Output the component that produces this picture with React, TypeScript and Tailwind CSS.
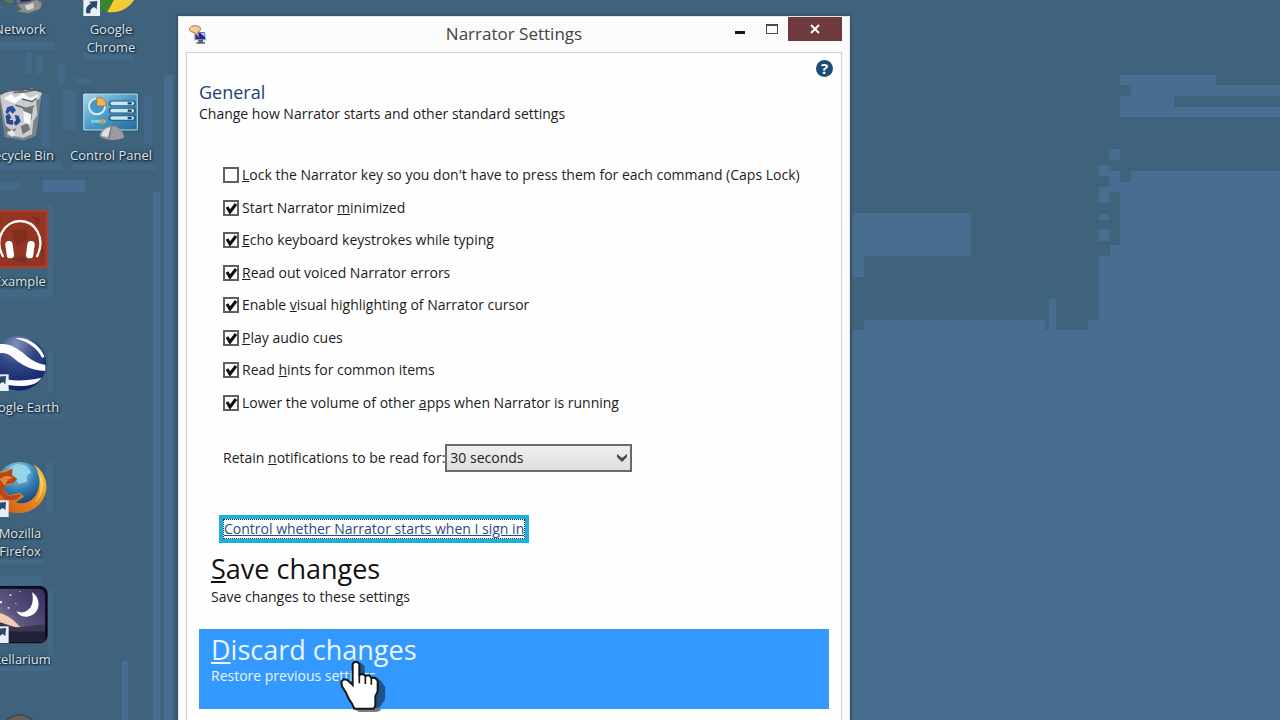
import type { ReactNode } from "react";

const options = [
  {
    id: "lock",
    checked: false,
    label: (
      <>
        <u>L</u>ock the Narrator key so you don't have to press them for each
        command (Caps Lock)
      </>
    ),
  },
  {
    id: "minimized",
    checked: true,
    label: (
      <>
        Start Narrator <u>m</u>inimized
      </>
    ),
  },
  {
    id: "echo",
    checked: true,
    label: (
      <>
        <u>E</u>cho keyboard keystrokes while typing
      </>
    ),
  },
  {
    id: "errors",
    checked: true,
    label: (
      <>
        <u>R</u>ead out voiced Narrator errors
      </>
    ),
  },
  {
    id: "highlight",
    checked: true,
    label: (
      <>
        Enable <u>v</u>isual highlighting of Narrator cursor
      </>
    ),
  },
  {
    id: "audio",
    checked: true,
    label: (
      <>
        <u>P</u>lay audio cues
      </>
    ),
  },
  {
    id: "hints",
    checked: true,
    label: (
      <>
        Read <u>h</u>ints for common items
      </>
    ),
  },
  {
    id: "volume",
    checked: true,
    label: (
      <>
        Lower the volume of other <u>a</u>pps when Narrator is running
      </>
    ),
  },
];

const Shortcut = () => (
  <g>
    <path d="M0 118h50v50H0z" fill="#e9eff3" />
    <path
      d="M9 160c-3-14 2-25 14-29l-6-6 25-2-2 25-7-7c-9 3-13 9-12 19z"
      fill="#28486e"
    />
  </g>
);

const NetworkIcon = () => (
  <>
    <path d="M20 20h90v114l-60 8-30-12z" fill="#4b4b70" />
    <path d="M28 30h62v100l-40 4-22-10z" fill="#5b4d9a" />
    <path d="M26 126l24 14 20-4-22-12z" fill="#48804f" />
    <path d="M70 60l68-8 12 84-40 12-36-8z" fill="#6c6f78" />
    <path d="M80 70l48-6 8 66-50 4z" fill="#211f62" />
    <path
      d="M72 142l32-6 30-10 18 12-6 18-36 14-40-6 16-8z"
      fill="#8f9191"
      stroke="#56616b"
      strokeWidth="4"
    />
    <path d="M98 146l26-8 2 16-20 6z" fill="#d5d6d6" />
  </>
);

const BinIcon = () => (
  <>
    <path d="M20 34l130-8-18 132-36 14-58-10z" fill="#7b8488" />
    <path
      d="M24 38l30-18 36 4 30-8 30 14-8 18-10 4 4 44-12 18-4 40-26 10-48-8z"
      fill="#c9cdd0"
    />
    <path d="M34 46l24-14 10 12 26-14 20 16 26-12-8 20-22 4-20-12-22 16z" fill="#f8f9fa" />
    <path
      d="M64 28l40-2 34-8M90 48l30 8 14-10M70 66l36 12 20-8"
      stroke="#62696d"
      strokeWidth="5"
      fill="none"
    />
    <path
      d="M92 76l32-8-6 44-18-14zM86 130l22-10 6 20-22 14zM36 124l20 16 18-4-12 18-22-2z"
      fill="#737777"
    />
    <path d="M94 84l24 10-4 32-18-8z" fill="#f4f5f6" />
    <path d="M46 72l16-4 10 14-10 10-8-8-8 10-6-6z" fill="#2f4e9e" />
    <path d="M40 98l12-6 6 12-6 6 12 2-2 14-18-4z" fill="#294892" />
    <path d="M68 96l12 2 6 18-14 12-8-8 8-8z" fill="#29458b" />
    <path d="M44 148l18-8 8 14-10 8z" fill="#e6e7e8" />
    <path d="M20 34c30-16 104-20 130-8" stroke="#4d5660" strokeWidth="5" fill="none" />
  </>
);

const HeadphonesIcon = () => (
  <>
    <path d="M-6 2h175v176H-6z" fill="#a5402e" />
    <path d="M-6 10h167v161H-6z" fill="#933522" />
    <path
      d="M10 20l20 5-8 20zM120 20l26 10-6 22zM60 66l40-8 8 36-36 14zM46 150l50-8 12 22zM146 100l10 30-6 30z"
      fill="#7f2e20"
    />
    <path
      d="M34 144C2 88 40 36 84 36c44 0 80 50 50 108"
      fill="none"
      stroke="#fffaf6"
      strokeWidth="7"
    />
    <rect x="42" y="96" width="22" height="52" rx="11" fill="#fff" transform="rotate(-8 53 122)" />
    <rect x="104" y="96" width="22" height="52" rx="11" fill="#fff" transform="rotate(8 115 122)" />
  </>
);

const EarthIcon = () => (
  <>
    <defs>
      <radialGradient id="earth" cx="45%" cy="15%" r="85%">
        <stop offset="0" stopColor="#8290b8" />
        <stop offset=".45" stopColor="#2f4584" />
        <stop offset="1" stopColor="#101f68" />
      </radialGradient>
      <clipPath id="earthClip">
        <circle cx="81" cy="85" r="82" />
      </clipPath>
    </defs>
    <circle cx="81" cy="85" r="82" fill="url(#earth)" />
    <g clipPath="url(#earthClip)" fill="#fdfdff">
      <path d="M70 10c36-8 76 22 88 56l-8 2C134 38 108 20 70 10z" />
      <path d="M0 34c40-18 72 2 98 24 20 18 38 28 62 32v18c-44-2-70-18-92-36C48 54 34 48 0 62z" />
      <path d="M0 120c44 20 92 20 148 8-8 18-36 25-66 25-34 0-64-10-82-20z" />
    </g>
    <Shortcut />
  </>
);

const FirefoxIcon = () => (
  <>
    <defs>
      <radialGradient id="globe" cx="45%" cy="20%" r="75%">
        <stop offset="0" stopColor="#a2dcf0" />
        <stop offset=".5" stopColor="#347fb3" />
        <stop offset="1" stopColor="#143267" />
      </radialGradient>
      <linearGradient id="tail" x1="0" y1="1" x2="1" y2="0">
        <stop offset="0" stopColor="#c84c15" />
        <stop offset=".65" stopColor="#ee9726" />
        <stop offset="1" stopColor="#fbd94c" />
      </linearGradient>
    </defs>
    <circle cx="84" cy="76" r="73" fill="url(#globe)" />
    <path d="M52 22l22-14 30 6 14 20-14 10 2 18-26 6-12-18-20 4z" fill="#94d4e9" />
    <path
      d="M124 10c32 18 46 58 36 88-10 34-44 60-82 58-38 2-70-24-78-60l4-60 20-4 30-8-2 18 20 12-14 16-18 2-6 14 18 16 32-6 12 10-24 18c30 10 58-8 66-36 8-26 6-56-14-78z"
      fill="url(#tail)"
    />
    <path
      d="M4 36l36-2 22-12-2 20 16 12-12 12-22 4-8 20 18 14 38-4-18 16-30 2-18-18-4-28z"
      fill="#b6471c"
    />
    <path d="M22 54l20-10 22 4-16 8-10 18z" fill="#e48637" />
    <path d="M132 26c20 32 18 74-4 98 20-12 36-54 18-80z" fill="#fbd45a" />
    <Shortcut />
  </>
);

const StellariumIcon = () => (
  <>
    <defs>
      <linearGradient id="night" x1="1" y1="0" x2="0" y2="1">
        <stop offset="0" stopColor="#332d5c" />
        <stop offset=".55" stopColor="#5c5680" />
        <stop offset="1" stopColor="#d3b3a4" />
      </linearGradient>
    </defs>
    <rect x="-3" y="-3" width="170" height="172" rx="24" fill="#0c0c1c" />
    <path d="M3 5h136c14 0 20 8 20 20v138H3z" fill="url(#night)" />
    <path d="M0 76c36 0 60 16 84 44H0z" fill="#f1cdb4" />
    <path d="M0 100c40 6 60 24 88 20 26-4 46-8 71-6v49H0z" fill="#3b3750" />
    <path d="M0 118c50 22 100 14 159 16v29H0z" fill="#23213a" />
    <path d="M120 16c30 18 26 68-14 73-17 2-28-7-32-16 30 13 57-15 46-57z" fill="#fff" />
    <path
      d="M53 22h5v5h-5zM23 42h7v7h-7zM47 60h5v5h-5zM82 12h3v3h-3zM70 48h3v3h-3z"
      fill="#e8e4f5"
    />
    <Shortcut />
  </>
);

const GimpIcon = () => (
  <>
    <circle cx="82" cy="62" r="56" fill="#675f5b" stroke="#3d4852" strokeWidth="5" />
    <circle cx="82" cy="72" r="42" fill="#8c8480" />
  </>
);

const ChromeIcon = () => (
  <>
    <circle cx="86" cy="86" r="80" fill="#d93a2c" />
    <path d="M17 46a80 80 0 0 0 56 119l36-66-46-6z" fill="#38842f" />
    <path d="M155 46a80 80 0 0 1-82 119l36-66V46z" fill="#f2cc35" />
    <circle cx="86" cy="86" r="36" fill="#f5f7f8" />
    <circle cx="86" cy="86" r="28" fill="#3f7fc7" />
    <g transform="translate(1 9)">
      <Shortcut />
    </g>
  </>
);

const ControlPanelIcon = () => (
  <>
    <defs>
      <linearGradient id="panel" x1="0" y1="0" x2="1" y2="1">
        <stop offset="0" stopColor="#a5d7ed" />
        <stop offset=".5" stopColor="#4a9bc5" />
        <stop offset="1" stopColor="#256a98" />
      </linearGradient>
    </defs>
    <path d="M-2 28h170v118H-2z" fill="#315674" />
    <path d="M2 33h161v108H2z" fill="url(#panel)" stroke="#b4dced" strokeWidth="3" />
    <circle cx="42" cy="70" r="24" fill="#4597c5" stroke="#d7edf5" strokeWidth="6" />
    <path d="M41 44h16l12 12v13H41z" fill="#f2b456" stroke="#8c653a" strokeWidth="2" />
    {[61, 83, 105].map((y) => (
      <g key={y}>
        <path d={`M86 ${y}h64`} stroke="#26577c" strokeWidth="17" strokeLinecap="round" />
        <path d={`M87 ${y}h61`} stroke="#c6e6f4" strokeWidth="11" strokeLinecap="round" />
        <path d={`M134 ${y}h12`} stroke="#1d4468" strokeWidth="7" />
      </g>
    ))}
    <path d="M24 115h44" stroke="#72d0ee" strokeWidth="9" />
    <path d="M52 108h12v14H52z" fill="#dc944b" />
    <path d="M50 160c0-16 18-31 36-31 20 0 34 14 38 34-20 12-58 10-74-3z" fill="#9a9b9c" />
    <path d="M55 157c3-13 16-24 28-24l-8 29c-8 0-14-1-20-5z" fill="#e0e0df" />
    <path d="M85 132l-7 34" stroke="#696b6d" strokeWidth="3" />
  </>
);

const DesktopIcon = ({ label, children }: { label: string; children: ReactNode }) => (
  <button className="flex h-[126px] w-24 shrink-0 flex-col items-center gap-[7px]">
    <svg viewBox="0 0 168 168" className="h-14 w-14 shrink-0 overflow-visible">
      {children}
    </svg>
    <span className="whitespace-pre text-center text-[13px] leading-[18px] text-[#dfe4e8] [text-shadow:1px_1px_2px_#0b1a28,0_0_3px_#14283a]">
      {label}
    </span>
  </button>
);

const Wallpaper = () => (
  <svg
    viewBox="0 0 1280 720"
    preserveAspectRatio="xMinYMin slice"
    className="absolute inset-0 h-full w-full"
  >
    <path d="M0 0h1280v720H0z" fill="#40637d" />
    <g fill="#476d90">
      <path d="M1120 75h96v10h64v11h-106v11h106v10h-160V96h11V85h-11z" />
      <path d="M853 213h118v43H864v21h-11z" />
      <path d="M1131 171h149v549H853V330h11v-10h181v10h32v-10h22v-64h11v-11h10v-63h11z" />
      <path d="M1077 320h11v10h-11z" fill="#40637d" />
      <path d="M1109 149h11v11h-11zM1109 171h11v21h-11zM1099 165h10v11h-10zM1099 187h10v16h-10zM1099 214h10v6h-10zM1099 229h10v12h-10zM1049 299h7v31h-7z" />
      <path d="M164 75h9v645h-9zM153 192h7v528h-7zM122 661h6v59h-6zM43 180h42v12H43z" />
    </g>
    <g fill="#476d90" opacity=".6">
      <path d="M0 182h20v8H0zM0 42h55v8H0zM26 52h6v22h-6zM36 56h7v18h-7zM58 64h7v20h-7zM75 78h16v6H75zM84 52h50v8H84zM0 163h62v7H0zM72 164h84v6H72zM42 94h8v54h-8zM62 90h14v40H62zM144 96h8v48h-8z" />
      <path d="M48 205h5v90h-5zM0 290h52v7H0zM48 352h5v40h-5zM0 413h63v4H0zM46 462h7v50h-7zM0 560h43v4H0zM0 576h42v9H0zM48 590h5v80h-5zM0 665h50v6H0z" />
    </g>
  </svg>
);

const NarratorIcon = () => (
  <svg viewBox="0 0 54 57" className="h-[19px] w-[18px]">
    <path d="M16 22h32l3 24H16z" fill="#8d93b5" />
    <path d="M20 24l26-2 2 20H20z" fill="#2424a0" />
    <path d="M34 24l12-1 1 13z" fill="#b1c8f0" />
    <path d="M28 44h14v8h6v4H22v-4h6z" fill="#596274" />
    <path
      d="M2 10C6 0 28 0 34 8c2 8-3 12-8 13l4 16-14-15C4 21 0 17 2 10z"
      fill="#f6cf97"
      stroke="#9a7449"
      strokeWidth="3"
    />
  </svg>
);

const HandCursor = () => (
  <svg
    viewBox="450 480 150 165"
    className="pointer-events-none absolute left-[161px] top-[643px] h-[55px] w-[50px]"
  >
    <path
      d="M508 486l16 12v24l32 8 18 14 12 18-1 36-14 22-10 8-54 2-18-14z"
      fill="#1f4777"
      opacity=".85"
    />
    <path d="M490 625h80l4 6-14 5h-54z" fill="#7b8085" />
    <path
      d="M488 492l5-6h9l6 6v32l10-2 8 5 12-1 6 7 12 1 7 8v32l-7 15v28l-5 9h-58l-7-15-10-15-8-18-12-19-2-14 7-7 10 1 10 9 7 7z"
      fill="#fff"
      stroke="#151515"
      strokeWidth="6"
    />
    <path d="M508 524v26M526 528v24M544 534v20" stroke="#151515" strokeWidth="5" />
  </svg>
);

const NarratorWindow = () => (
  <main className="absolute left-[178px] top-4 w-[672px] border border-[#e4e7ea] bg-[#fbfbfb] px-[7px] pb-2 text-[#1c1c1c] shadow-[0_0_3px_1px_#3b4a5c]">
    <header className="grid h-[35px] grid-cols-[1fr_auto_1fr] items-start">
      <span className="pl-[3px] pt-2">
        <NarratorIcon />
      </span>
      <h1 className="pt-1 text-[17px] leading-[26px] text-[#444444]">Narrator Settings</h1>
      <div className="flex justify-end">
        <button aria-label="Minimize" className="flex h-6 w-8 items-center justify-center pt-1.5">
          <span className="h-[3px] w-2.5 bg-[#161616]" />
        </button>
        <button aria-label="Maximize" className="flex h-6 w-8 items-center justify-center">
          <span className="h-2.5 w-3 border border-t-2 border-[#4a4a4a]" />
        </button>
        <button
          aria-label="Close"
          className="flex h-6 w-[54px] items-center justify-center bg-[#6e3a3d]"
        >
          <svg viewBox="0 0 10 10" className="h-2.5 w-2.5" stroke="#fff" strokeWidth="2">
            <path d="M1 1l8 8M9 1L1 9" />
          </svg>
        </button>
      </div>
    </header>

    <section className="border border-[#cfd1d3] bg-[#fefefe] px-3 pb-5 pt-[7px]">
      <div className="flex justify-end">
        <button
          aria-label="Help"
          className="-mr-1 flex h-[17px] w-[17px] items-center justify-center rounded-full bg-[#1c4c73] text-[15px] font-bold leading-[17px] text-white"
        >
          ?
        </button>
      </div>
      <h2 className="mt-1 text-[18px] leading-[23px] text-[#22407c]">General</h2>
      <p className="text-[14px] leading-5">Change how Narrator starts and other standard settings</p>

      <div className="ml-6 mt-[41px] flex h-[248px] flex-col justify-between">
        {options.map((option) => (
          <div key={option.id} className="flex h-5 items-center gap-[3px]">
            <span className="grid h-4 w-4 shrink-0">
              <input
                type="checkbox"
                id={option.id}
                defaultChecked={option.checked}
                className="peer col-start-1 row-start-1 h-4 w-4 appearance-none border-2 border-[#606060] bg-white"
              />
              <svg
                viewBox="0 0 16 16"
                className="pointer-events-none invisible col-start-1 row-start-1 h-4 w-4 peer-checked:visible"
              >
                <path d="M4 7l3 5 6-8" fill="none" stroke="#111" strokeWidth="3" />
              </svg>
            </span>
            <label htmlFor={option.id} className="whitespace-nowrap text-[14px] leading-5">
              {option.label}
            </label>
          </div>
        ))}
      </div>

      <div className="ml-6 mt-[31px] flex items-center">
        <label htmlFor="retain" className="whitespace-nowrap text-[14px] leading-5">
          Retain <u>n</u>otifications to be read for:
        </label>
        <div className="grid h-7 w-[187px] items-center">
          <select
            id="retain"
            className="col-start-1 row-start-1 h-7 appearance-none border-2 border-[#6a6a6a] bg-linear-to-b from-[#efefef] to-[#dedede] pb-0.5 pl-[3px] text-[14px]"
          >
            <option>30 seconds</option>
            <option>1 minute</option>
            <option>5 minutes</option>
          </select>
          <svg
            viewBox="0 0 12 10"
            className="pointer-events-none col-start-1 row-start-1 mr-1 h-2.5 w-3 justify-self-end"
          >
            <path d="M1 1l5 4 5-4v3L6 9 1 4z" fill="#4c4c4c" />
          </svg>
        </div>
      </div>

      <div className="ml-5 mt-[43px] flex">
        <a
          href="#signin"
          className="border-4 border-[#1ab1df] text-[14px] leading-[18px] text-[#2c4a86] underline"
        >
          <span className="block whitespace-nowrap border border-dotted border-[#222222]">
            Control whether Narrator starts when I sign in
          </span>
        </a>
      </div>

      <button className="mt-1 block w-full px-3 py-1 text-left">
        <span className="block text-[27px] leading-9 text-[#111111]">
          <u>S</u>ave changes
        </span>
        <span className="block text-[14px] leading-5">Save changes to these settings</span>
      </button>
      <button className="mt-[18px] flex h-20 w-full flex-col items-start justify-start bg-[#3499fe] px-3 pt-[5px] text-left text-[#eaf5ff]">
        <span className="text-[27px] leading-8">
          <u>D</u>iscard changes
        </span>
        <span className="text-[14px] leading-5">Restore previous settings</span>
      </button>
    </section>
    <HandCursor />
  </main>
);

const App = () => {
  return (
    <div className="relative h-screen overflow-hidden bg-[#40637d] font-['Open_Sans','Noto_Sans',sans-serif]">
      <Wallpaper />
      <nav className="absolute -left-7 -top-[43px] flex flex-col">
        <DesktopIcon label="Network">
          <NetworkIcon />
        </DesktopIcon>
        <DesktopIcon label="Recycle Bin">
          <BinIcon />
        </DesktopIcon>
        <DesktopIcon label="Example">
          <HeadphonesIcon />
        </DesktopIcon>
        <DesktopIcon label="Google Earth">
          <EarthIcon />
        </DesktopIcon>
        <DesktopIcon label={"Mozilla\nFirefox"}>
          <FirefoxIcon />
        </DesktopIcon>
        <DesktopIcon label="Stellarium">
          <StellariumIcon />
        </DesktopIcon>
        <DesktopIcon label="GIMP 2">
          <GimpIcon />
        </DesktopIcon>
      </nav>
      <nav className="absolute -top-[43px] left-[63px] flex flex-col">
        <DesktopIcon label={"Google\nChrome"}>
          <ChromeIcon />
        </DesktopIcon>
        <DesktopIcon label="Control Panel">
          <ControlPanelIcon />
        </DesktopIcon>
      </nav>
      <NarratorWindow />
    </div>
  );
};

export default App;
